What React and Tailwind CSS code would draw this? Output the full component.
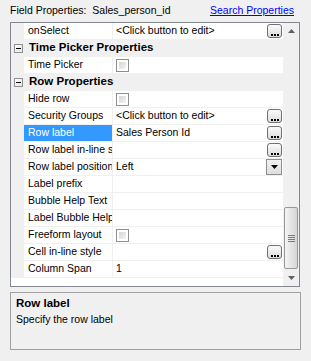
import React from 'react';

// Field properties grid - property rows and section headers
const rows = [
    { label: 'onSelect', value: '<Click button to edit>', button: 'ellipsis' },
    { section: 'Time Picker Properties' },
    { label: 'Time Picker', checkbox: true },
    { section: 'Row Properties' },
    { label: 'Hide row', checkbox: true },
    { label: 'Security Groups', value: '<Click button to edit>', button: 'ellipsis' },
    { label: 'Row label', value: 'Sales Person Id', button: 'ellipsis', selected: true },
    { label: 'Row label in-line style', value: '', button: 'ellipsis' },
    { label: 'Row label position', value: 'Left', button: 'dropdown' },
    { label: 'Label prefix', value: '' },
    { label: 'Bubble Help Text', value: '' },
    { label: 'Label Bubble Help', value: '' },
    { label: 'Freeform layout', checkbox: true },
    { label: 'Cell in-line style', value: '', button: 'ellipsis' },
    { label: 'Column Span', value: '1' },
];

const EllipsisButton = () => (
    <div className="w-[15px] h-[14px] mt-[1px] rounded-[3px] border border-[#707070] bg-gradient-to-b from-[#fbfbfb] to-[#dcdcdc] flex items-end justify-center gap-[1px] pb-[1px]">
        <span className="w-[2px] h-[2px] bg-black" />
        <span className="w-[2px] h-[2px] bg-black" />
        <span className="w-[2px] h-[2px] bg-black" />
    </div>
);

const DropdownButton = () => (
    <div className="w-[16px] h-[16px] border border-[#8e8f8f] bg-gradient-to-b from-[#f2f2f2] to-[#dedede] flex items-center justify-center">
        <svg width="7" height="4" viewBox="0 0 7 4">
            <path d="M0 0h7L3.5 4z" fill="#000" />
        </svg>
    </div>
);

const Checkbox = () => (
    <div className="w-[13px] h-[13px] border border-[#8e8f8f] bg-white p-[2px]">
        <div className="w-full h-full bg-gradient-to-br from-[#d4d4d4] to-[#f4f4f4]" />
    </div>
);

const MinusBox = () => (
    <div className="w-[9px] h-[9px] border border-[#919191] bg-gradient-to-br from-white to-[#e4e4e4] flex items-center justify-center">
        <span className="w-[5px] h-[1px] bg-black" />
    </div>
);

const PropertyRow = ({ row }) => {
    if (row.section) {
        return (
            <div className="flex items-center h-[17px] bg-[#f0f0f0] border-b border-[#f0f0f0]">
                <div className="w-[13px] flex justify-center pl-[1px]">
                    <MinusBox />
                </div>
                <span className="pl-[5px] font-bold text-[11.5px] text-black">{row.section}</span>
            </div>
        );
    }
    return (
        <div className="flex h-[17px] border-b border-[#f0f0f0]">
            <div className="w-[13px] bg-[#f0f0f0]" />
            <div className={`w-[89px] border-r border-[#f0f0f0] pl-[4px] flex items-center overflow-hidden whitespace-nowrap ${row.selected ? 'bg-[#3399ff] text-white' : 'text-black'}`}>
                {row.label}
            </div>
            <div className="flex-1 flex items-start overflow-hidden">
                <div className="flex-1 pl-[3px] h-full flex items-center whitespace-nowrap overflow-hidden">
                    {row.checkbox ? <Checkbox /> : row.value}
                </div>
                {row.button === 'ellipsis' && (
                    <div className="mr-[1px]">
                        <EllipsisButton />
                    </div>
                )}
                {row.button === 'dropdown' && (
                    <div className="mr-[1px]">
                        <DropdownButton />
                    </div>
                )}
            </div>
        </div>
    );
};

const ScrollBar = () => (
    <div className="w-[16px] bg-[#f0f0f0] flex flex-col items-center">
        <div className="h-[16px] flex items-center justify-center">
            <svg width="7" height="4" viewBox="0 0 7 4">
                <path d="M3.5 0L7 4H0z" fill="#606060" />
            </svg>
        </div>
        <div className="flex-1 w-full" />
        <div className="w-[14px] h-[62px] rounded-[2px] border border-[#979797] bg-gradient-to-r from-[#f4f4f4] to-[#d6d6d6] flex flex-col items-center justify-center gap-[1px]">
            <span className="w-[7px] h-[1px] bg-[#7a7a7a]" />
            <span className="w-[7px] h-[1px] bg-[#7a7a7a]" />
            <span className="w-[7px] h-[1px] bg-[#7a7a7a]" />
            <span className="w-[7px] h-[1px] bg-[#7a7a7a]" />
        </div>
        <div className="h-[17px] flex items-center justify-center">
            <svg width="7" height="4" viewBox="0 0 7 4">
                <path d="M0 0h7L3.5 4z" fill="#606060" />
            </svg>
        </div>
    </div>
);

const App = () => {
    return (
        <div
            className="w-[311px] h-[361px] bg-[#f0f0f0] text-[10.5px] text-black"
            style={{ fontFamily: '"Liberation Sans", Arial, sans-serif' }}
        >
            {/* Header */}
            <div className="h-[22px] flex items-center justify-between pl-[10px] pr-[17px] text-[10.5px]">
                <span className="whitespace-pre">Field Properties:  Sales_person_id</span>
                <span className="text-[#0000ff] underline">Search Properties</span>
            </div>

            {/* Grid */}
            <div className="ml-[10px] w-[290px] h-[265px] border border-[#828790] flex">
                <div className="flex-1 bg-white flex flex-col">
                    {rows.map((row, i) => (
                        <PropertyRow key={i} row={row} />
                    ))}
                </div>
                <ScrollBar />
            </div>

            {/* Description */}
            <div className="ml-[10px] mt-[5px] w-[291px] h-[58px] border border-[#a0a0a0] px-[5px] pt-[3px]">
                <div className="font-bold text-[11.5px] leading-[15px]">Row label</div>
                <div className="leading-[15px] mt-[1px]">Specify the row label</div>
            </div>
        </div>
    );
};

export default App;
